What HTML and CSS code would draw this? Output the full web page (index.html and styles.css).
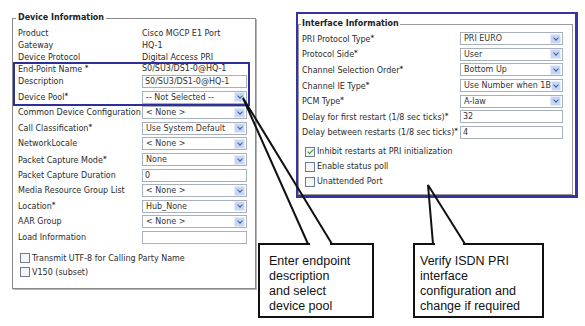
FILE: index.html
```html
<!DOCTYPE html>
<html lang="en">
<head>
  <meta charset="UTF-8" />
  <meta name="viewport" content="width=device-width, initial-scale=1.0" />
  <title>MGCP E1 PRI Port Configuration</title>
  <link rel="stylesheet" href="styles.css">
</head>
<body>

  <div class="left-col">
    <fieldset class="device">
      <legend>Device Information</legend>
      <div class="rows">
        <div class="row static"><span class="label">Product</span><span class="value">Cisco MGCP E1 Port</span></div>
        <div class="row static"><span class="label">Gateway</span><span class="value">HQ-1</span></div>
        <div class="row static"><span class="label">Device Protocol</span><span class="value">Digital Access PRI</span></div>

        <div class="highlight">
          <div class="row static short"><span class="label">End-Point Name <span class="req">*</span></span><span class="value">S0/SU3/DS1-0@HQ-1</span></div>
          <div class="row"><span class="label">Description</span><span class="input">S0/SU3/DS1-0@HQ-1</span></div>
          <div class="row"><span class="label">Device Pool<span class="req">*</span></span><span class="select"><span>-- Not Selected --</span><span class="arrow"></span></span></div>
        </div>

        <div class="row"><span class="label">Common Device Configuration</span><span class="select"><span>&lt; None &gt;</span><span class="arrow"></span></span></div>
        <div class="row"><span class="label">Call Classification<span class="req">*</span></span><span class="select"><span>Use System Default</span><span class="arrow"></span></span></div>
        <div class="row"><span class="label">NetworkLocale</span><span class="select"><span>&lt; None &gt;</span><span class="arrow"></span></span></div>
        <div class="row"><span class="label">Packet Capture Mode<span class="req">*</span></span><span class="select"><span>None</span><span class="arrow"></span></span></div>
        <div class="row"><span class="label">Packet Capture Duration</span><span class="input">0</span></div>
        <div class="row"><span class="label">Media Resource Group List</span><span class="select"><span>&lt; None &gt;</span><span class="arrow"></span></span></div>
        <div class="row"><span class="label">Location<span class="req">*</span></span><span class="select"><span>Hub_None</span><span class="arrow"></span></span></div>
        <div class="row"><span class="label">AAR Group</span><span class="select"><span>&lt; None &gt;</span><span class="arrow"></span></span></div>
        <div class="row"><span class="label">Load Information</span><span class="input"></span></div>
      </div>

      <div class="checks">
        <div class="check"><span class="box"></span>Transmit UTF-8 for Calling Party Name</div>
        <div class="check"><span class="box"></span>V150 (subset)</div>
      </div>
    </fieldset>
  </div>

  <div class="right-col">
    <div class="iface">
      <fieldset>
        <legend>Interface Information</legend>
        <div class="rows">
          <div class="row"><span class="label">PRI Protocol Type<span class="req">*</span></span><span class="select"><span>PRI EURO</span><span class="arrow"></span></span></div>
          <div class="row"><span class="label">Protocol Side<span class="req">*</span></span><span class="select"><span>User</span><span class="arrow"></span></span></div>
          <div class="row"><span class="label">Channel Selection Order<span class="req">*</span></span><span class="select"><span>Bottom Up</span><span class="arrow"></span></span></div>
          <div class="row"><span class="label">Channel IE Type<span class="req">*</span></span><span class="select"><span>Use Number when 1B</span><span class="arrow"></span></span></div>
          <div class="row"><span class="label">PCM Type<span class="req">*</span></span><span class="select"><span>A-law</span><span class="arrow"></span></span></div>
          <div class="row"><span class="label">Delay for first restart (1/8 sec ticks)<span class="req">*</span></span><span class="input">32</span></div>
          <div class="row"><span class="label">Delay between restarts (1/8 sec ticks)<span class="req">*</span></span><span class="input">4</span></div>
        </div>
        <div class="checks">
          <div class="check"><span class="box on"></span>Inhibit restarts at PRI initialization</div>
          <div class="check"><span class="box"></span>Enable status poll</div>
          <div class="check"><span class="box"></span>Unattended Port</div>
        </div>
      </fieldset>
    </div>

    <div class="callouts">
      <div class="callout first">Enter endpoint<br>description<br>and select<br>device pool</div>
      <div class="callout second">Verify ISDN PRI<br>interface<br>configuration and<br>change if required</div>
    </div>
  </div>

  <svg class="pointers" width="585" height="326" viewBox="0 0 585 326">
    <line x1="310" y1="244" x2="330" y2="244" stroke="#fff" stroke-width="3" />
    <line x1="435" y1="244" x2="463" y2="244" stroke="#fff" stroke-width="3" />
    <polyline points="308,244 243,98 332,244" fill="none" stroke="#111" stroke-width="2" />
    <polyline points="433,244 428,185 465,244" fill="none" stroke="#111" stroke-width="2" />
  </svg>

</body>
</html>
```

FILE: styles.css
```css
* {
  box-sizing: border-box;
}

body {
  margin: 0;
  width: 585px;
  height: 326px;
  overflow: hidden;
  position: relative;
  display: flex;
  align-items: flex-start;
  background: #fff;
  font-family: "DejaVu Sans", Verdana, sans-serif;
  font-size: 8px;
  color: #2b2b2b;
}

fieldset {
  margin: 0;
  padding: 0;
  min-width: 0;
}

legend {
  font-weight: bold;
  line-height: 10px;
  color: #222;
}

/* left panel */
.device {
  margin: 13px 0 0 12px;
  width: 244px;
  height: 276px;
  border: 1px solid #8a8a8a;
  box-shadow: 1px 1px 0 #b5b5b5;
}

.device legend {
  margin-left: 3px;
  padding: 0 2px;
}

.rows {
  padding-top: 4px;
}

.row {
  display: flex;
  align-items: center;
  height: 15.55px;
  padding-left: 5px;
  white-space: nowrap;
}

.row.static {
  height: 12px;
}

.row.short {
  height: 11px;
}

.label {
  width: 124px;
  flex: none;
}

.req {
  font-size: 7px;
  font-weight: bold;
  vertical-align: 2px;
}

.highlight {
  margin-left: 1px;
  width: 235px;
  outline: 2px solid #2f2f9c;
  outline-offset: -1px;
}

.highlight .row {
  padding-left: 4px;
}

.select,
.input {
  width: 105px;
  height: 13px;
  border: 1px solid #a7b0bb;
  background: #fff;
  display: flex;
  align-items: center;
  padding-left: 3px;
  color: #333;
}

.select {
  justify-content: space-between;
  padding-right: 1px;
}

.input {
  padding-left: 2px;
}

.arrow {
  width: 11px;
  height: 10px;
  background: #c6d6f3;
  border: 1px solid #e4ecfb;
  display: flex;
  justify-content: center;
  align-items: center;
}

.arrow::before {
  content: "";
  width: 3px;
  height: 3px;
  border-right: 1.5px solid #3d5a9a;
  border-bottom: 1.5px solid #3d5a9a;
  transform: rotate(45deg);
  margin-top: -2px;
}

.checks {
  margin-top: 6px;
}

.check {
  display: flex;
  align-items: center;
  gap: 2px;
  height: 14px;
  padding-left: 7px;
  white-space: nowrap;
}

.box {
  width: 10px;
  height: 10px;
  flex: none;
  border: 1px solid #6d7d8d;
  background: #f6f6f6;
  display: flex;
  justify-content: center;
  align-items: center;
}

.box.on::after {
  content: "";
  width: 2px;
  height: 5px;
  border-right: 1.5px solid #22a022;
  border-bottom: 1.5px solid #22a022;
  transform: rotate(45deg);
  margin-top: -2px;
}

/* right panel */
.right-col {
  display: flex;
  flex-direction: column;
}

.iface {
  margin: 12px 0 0 40px;
  width: 282px;
  height: 186px;
  border: 2px solid #3434a4;
  border-right-width: 3px;
  border-bottom-width: 3px;
  padding-top: 5px;
}

.iface fieldset {
  margin-right: 2px;
  height: 176px;
  border: 1px solid #9a9a9a;
}

.iface legend {
  margin-left: 2px;
  padding: 0 1px;
}

.iface .rows {
  padding-top: 2px;
}

.iface .row {
  height: 15.6px;
  padding-left: 3px;
}

.iface .label {
  width: 158px;
}

.iface .select,
.iface .input {
  width: 103px;
}

.iface .checks {
  margin-top: 4px;
}

.iface .check {
  height: 15px;
  padding-left: 6px;
}

/* callouts */
.callouts {
  display: flex;
  gap: 39px;
  margin: 45px 0 0 2px;
}

.callout {
  height: 75px;
  border: 2px solid #111;
  background: #fff;
  padding: 9px 4px 0 5px;
  font-family: "Liberation Sans", Arial, sans-serif;
  font-size: 12.5px;
  line-height: 15px;
  color: #111;
  white-space: nowrap;
}

.callout.first {
  width: 116px;
  padding-left: 9px;
}

.callout.second {
  width: 131px;
}

.pointers {
  position: absolute;
  left: 0;
  top: 0;
  pointer-events: none;
}
```
